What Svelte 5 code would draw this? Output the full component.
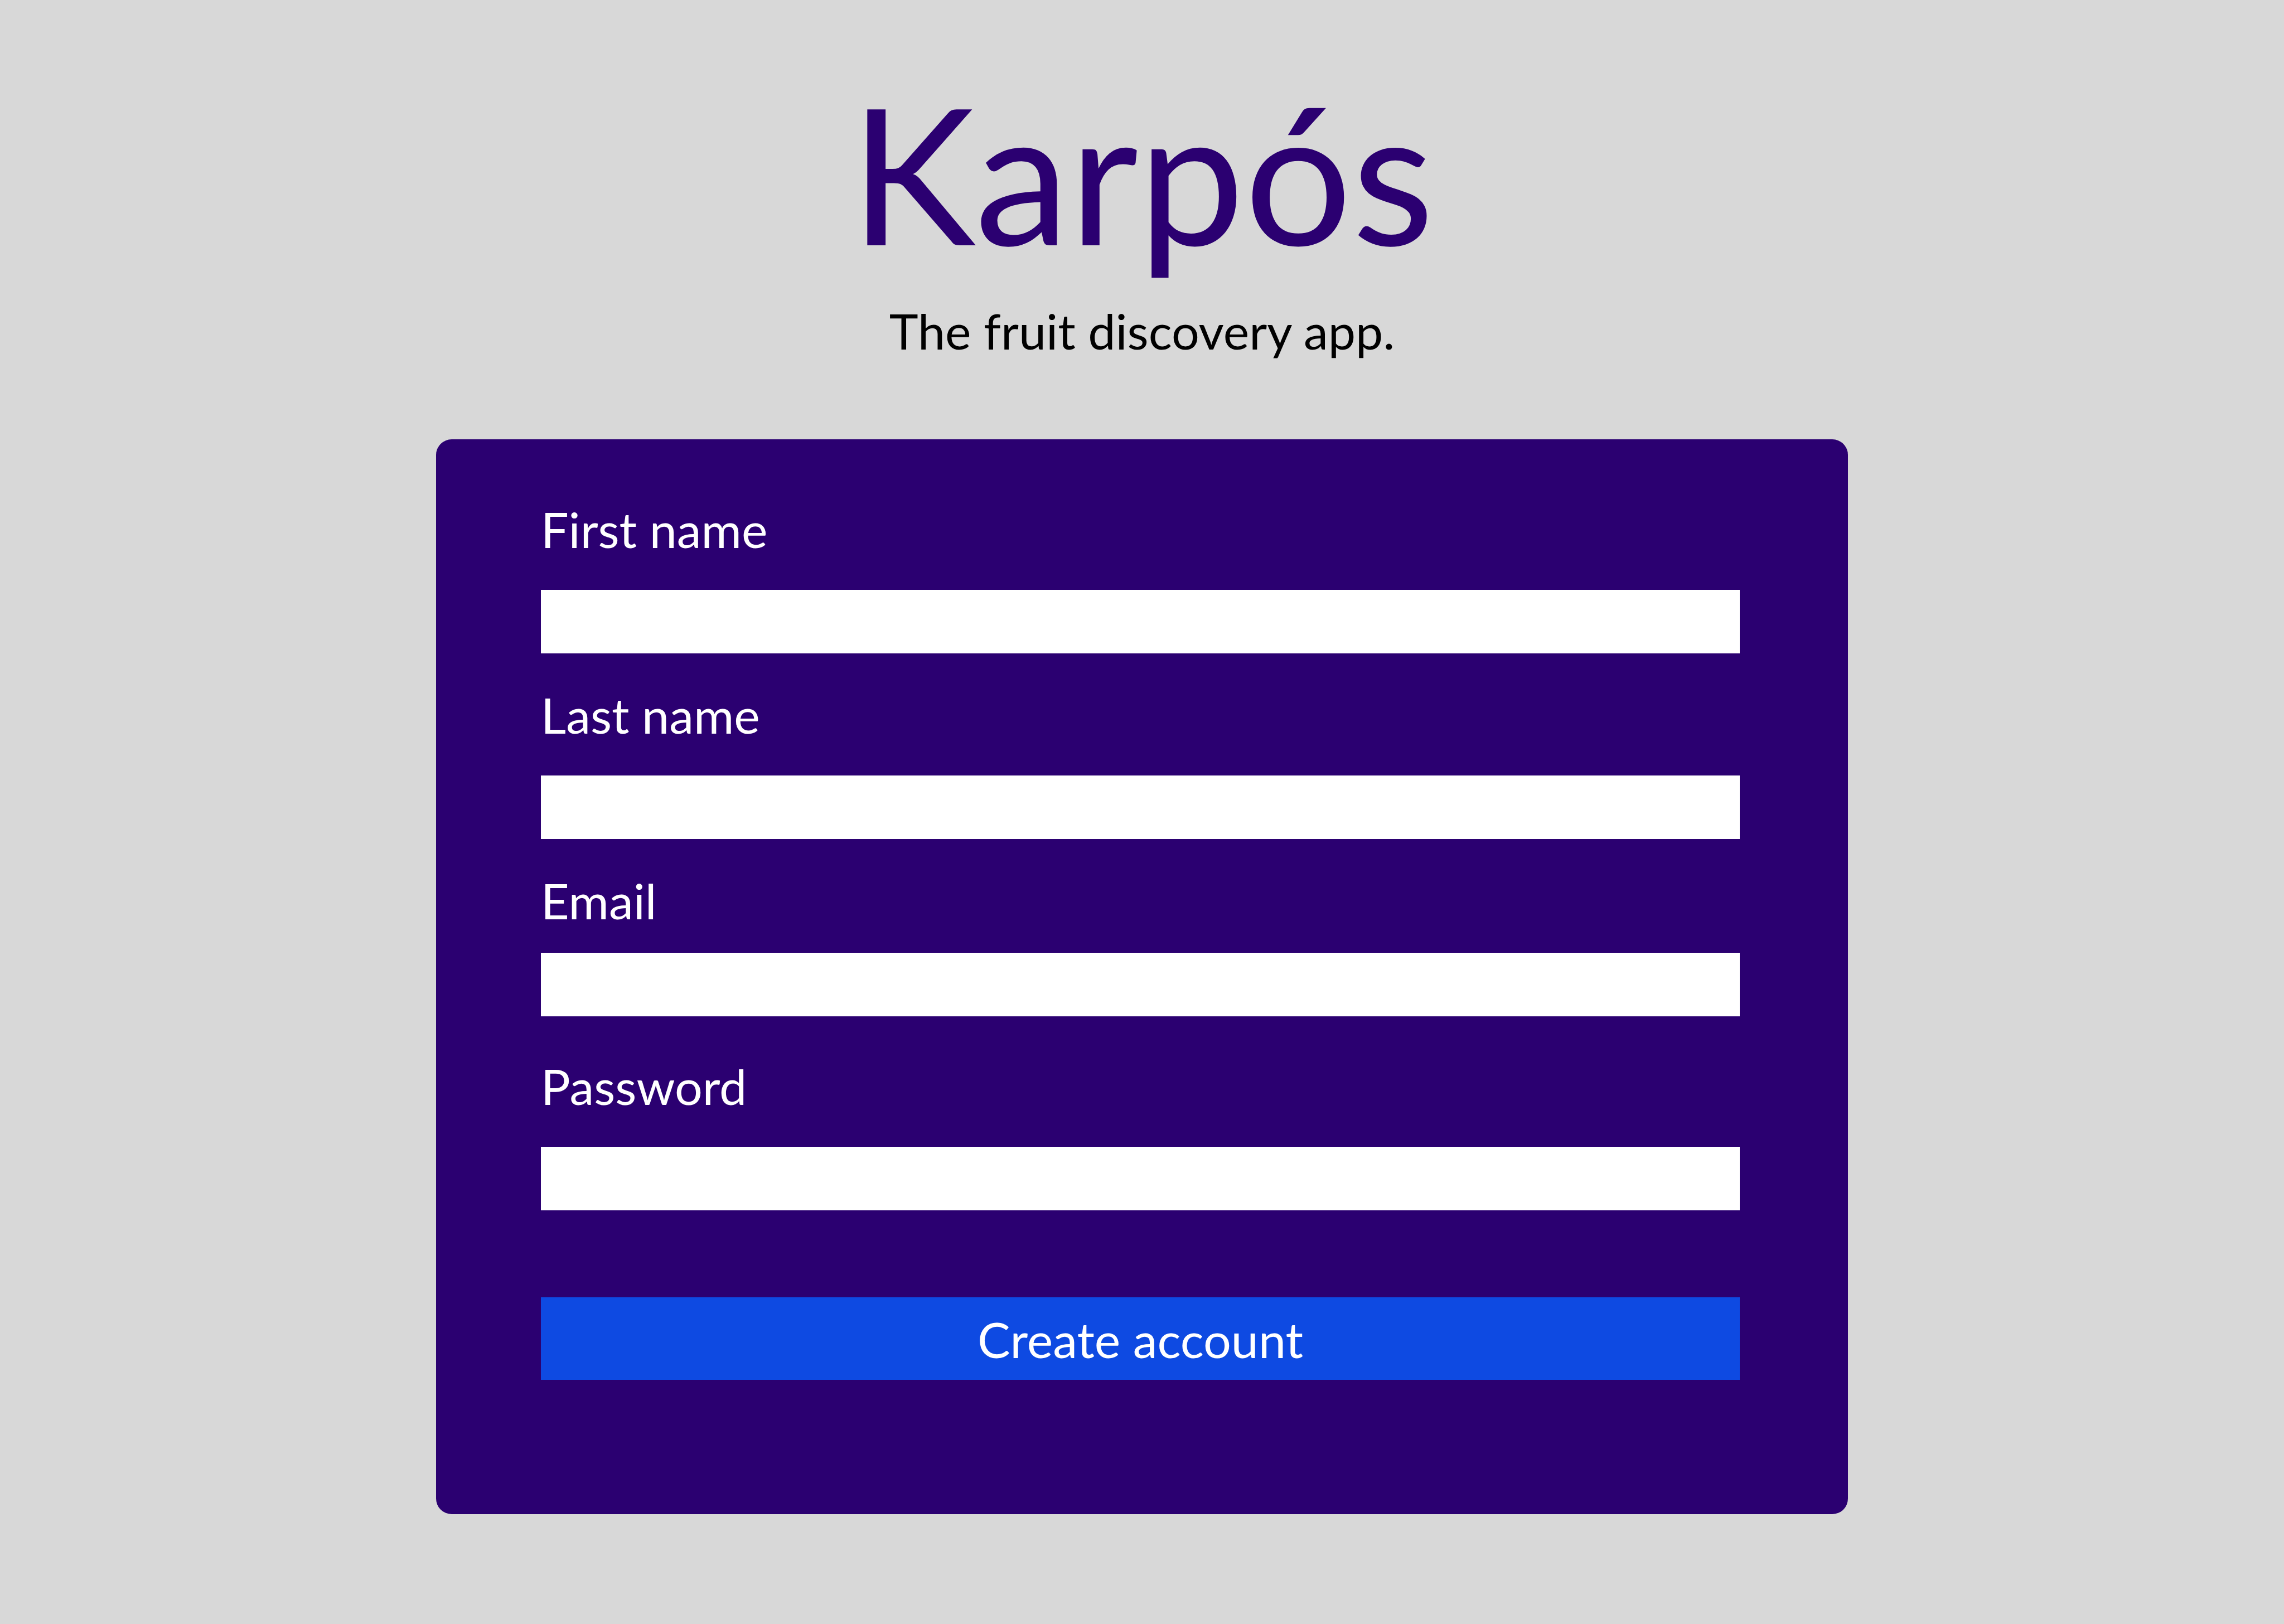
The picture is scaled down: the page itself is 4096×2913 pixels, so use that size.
<script>
  const fields = [
    { id: 'first-name', label: 'First name', type: 'text', autocomplete: 'given-name' },
    { id: 'last-name', label: 'Last name', type: 'text', autocomplete: 'family-name' },
    { id: 'email', label: 'Email', type: 'email', autocomplete: 'email', tight: true },
    { id: 'password', label: 'Password', type: 'password', autocomplete: 'new-password' }
  ];

  function submit(event) {
    event.preventDefault();
  }
</script>

<main class="page">
  <header class="brand">
    <h1>Karpós</h1>
    <p>The fruit discovery app.</p>
  </header>

  <form class="card" onsubmit={submit}>
    <div class="fields">
      {#each fields as field (field.id)}
        <div class="field" class:tight={field.tight}>
          <label for={field.id}>{field.label}</label>
          <input id={field.id} name={field.id} type={field.type} autocomplete={field.autocomplete} />
        </div>
      {/each}
    </div>
    <button type="submit">Create account</button>
  </form>
</main>

<style>
  :global(body) {
    background: #d8d8d8;
  }

  .page {
    box-sizing: border-box;
    min-height: 100vh;
    padding: 104px 32px;
    display: flex;
    flex-direction: column;
    align-items: center;
    gap: 142px;
    background: #d8d8d8;
    color: #000;
    font-family: Lato, 'Open Sans', sans-serif;
    font-size: 88px;
    line-height: 106px;
  }

  .brand {
    display: flex;
    flex-direction: column;
    align-items: center;
    gap: 28px;
    text-align: center;
  }

  h1 {
    margin: 0;
    color: #2b0071;
    font-size: 340px;
    font-weight: 400;
    line-height: 408px;
  }

  p {
    margin: 0;
  }

  .card {
    box-sizing: border-box;
    width: 100%;
    max-width: 2532px;
    padding: 108px 194px 241px 188px;
    display: flex;
    flex-direction: column;
    gap: 156px;
    border-radius: 28px;
    background: #2b0071;
    color: #fff;
  }

  .fields {
    display: grid;
    grid-auto-rows: 1fr;
    gap: 57px;
  }

  .field {
    display: flex;
    flex-direction: column;
    gap: 56px;
  }

  .field.tight {
    gap: 41px;
  }

  input {
    box-sizing: border-box;
    width: 100%;
    height: 114px;
    padding: 0 24px;
    border: 0;
    border-radius: 0;
    background: #fff;
    color: #000;
    font: inherit;
  }

  button {
    padding: 22px 24px 20px;
    border: 0;
    border-radius: 0;
    background: #0e4ae2;
    color: inherit;
    font: inherit;
    cursor: pointer;
  }
</style>
